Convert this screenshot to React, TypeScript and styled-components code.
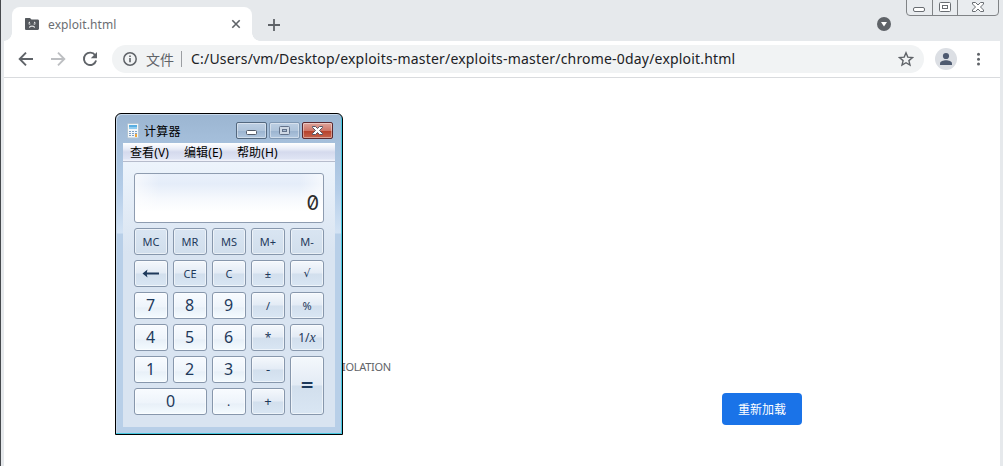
import React from "react";
import styled, { createGlobalStyle, css } from "styled-components";

const GlobalStyle = createGlobalStyle`
  * { box-sizing: border-box; }
  body { margin: 0; overflow: hidden; font-family: "Noto Sans", "Noto Sans CJK SC", sans-serif; }
  button { font-family: inherit; margin: 0; padding: 0; }
`;

const Desktop = styled.div`
  position: relative;
  width: 1003px;
  height: 466px;
  padding: 0 3px 0 4px;
  background: linear-gradient(90deg, #46494d 1px, #e6e9ec 1px);
  display: flex;
  flex-direction: column;
  overflow: hidden;
`;

const TabStrip = styled.div`
  height: 41px;
  flex: none;
  display: flex;
  align-items: flex-start;
  padding: 7px 0 0 8px;
`;

const Tab = styled.div`
  position: relative;
  width: 240px;
  height: 34px;
  padding: 0 10px 0 12px;
  border-radius: 8px 8px 0 0;
  background: #fff;
  display: flex;
  align-items: center;
  &::before, &::after {
    content: "";
    position: absolute;
    bottom: 0;
    width: 8px;
    height: 8px;
  }
  &::before { left: -8px; background: radial-gradient(circle at 0 0, transparent 7.5px, #fff 8px); }
  &::after { right: -8px; background: radial-gradient(circle at 100% 0, transparent 7.5px, #fff 8px); }
`;

const TabTitle = styled.span`
  flex: 1;
  margin-left: 8px;
  font-size: 12px;
  letter-spacing: 0.1px;
  color: #6b6e72;
`;

const NewTab = styled.div`
  margin: 9px 0 0 14px;
  height: 16px;
  flex: 1;
`;

const TabSearch = styled.div`
  margin: 10px 109px 0 0;
  height: 14px;
  svg { display: block; }
`;

const WindowControls = styled.div`
  position: absolute;
  top: -2px;
  left: 906px;
  width: 93px;
  height: 18px;
  border: 1px solid #808386;
  border-radius: 0 0 4px 4px;
  background: #e9ecef;
  display: flex;
`;

const WindowControl = styled.div<{ $width: number }>`
  width: ${(p) => p.$width}px;
  height: 16px;
  & + & { border-left: 1px solid #808386; }
  svg { display: block; }
`;

const Toolbar = styled.div`
  height: 37px;
  flex: none;
  padding: 0 13px 1px 14px;
  background: #fff;
  border-bottom: 1px solid #d9dbde;
  display: flex;
  align-items: center;
`;

const NavButtons = styled.div`
  width: 94px;
  display: flex;
  gap: 16px;
  svg { display: block; }
`;

const Omnibox = styled.div`
  width: 812px;
  height: 28px;
  padding: 0 10px;
  border-radius: 14px;
  background: #f1f3f4;
  display: flex;
  align-items: center;
  svg { flex: none; }
`;

const Scheme = styled.span`
  margin-left: 8px;
  padding-right: 7px;
  border-right: 1px solid #9b9ea2;
  line-height: 16px;
  font-size: 14px;
  font-family: "Noto Sans CJK SC", sans-serif;
  color: #5f6368;
`;

const Url = styled.span`
  flex: 1;
  margin-left: 9px;
  font-size: 14px;
  letter-spacing: 0.19px;
  white-space: nowrap;
  color: #202124;
`;

const Avatar = styled.div`
  width: 22px;
  height: 22px;
  margin: 0 13px 0 11px;
  border-radius: 50%;
  background: #dcdfe4;
  svg { display: block; }
`;

const Page = styled.main`
  width: 996px;
  flex: 1;
  background: #fff;
  padding: 280px 198px 0 338px;
  display: flex;
  flex-direction: column;
`;

const ErrorCode = styled.p`
  margin: 0;
  height: 35px;
  font-size: 11px;
  line-height: 18px;
  letter-spacing: -0.3px;
  color: #5f6368;
`;

const ReloadButton = styled.button`
  align-self: flex-end;
  width: 80px;
  height: 32px;
  border: 0;
  border-radius: 4px;
  background: #1a73e8;
  color: #fff;
  font: 12px/32px "Noto Sans CJK SC", sans-serif;
`;

const CalcWindow = styled.section`
  position: absolute;
  left: 115px;
  top: 113px;
  width: 228px;
  height: 322px;
  padding: 1px 7px 7px;
  border: 1px solid #000;
  border-radius: 6px 6px 0 0;
  background: linear-gradient(#9bb5d1 0, #a5bfdb 28px, #b4cde8 75px, #d3e3f4 119px, #b8cfe8 120px);
  box-shadow: inset -1px -1px 0 #45c8e0, inset 1px 1px 0 #c8d9eb;
  color: #1e395b;
`;

const TitleBar = styled.div`
  height: 28px;
  padding: 7px 2px 0 3px;
  display: flex;
  > svg { display: block; margin-top: 1px; }
`;

const CalcTitle = styled.span`
  flex: 1;
  margin-left: 4px;
  font: 12px/18px "Noto Sans CJK SC", sans-serif;
  letter-spacing: 0.3px;
  color: #000;
`;

const CaptionButtons = styled.div`
  display: flex;
  gap: 2px;
`;

const CaptionButton = styled.div<{ $kind?: "close" | "idle" }>`
  width: 31px;
  height: 17px;
  border: 1px solid ${(p) => (p.$kind === "close" ? "#5b2930" : p.$kind === "idle" ? "#7f97b2" : "#53687f")};
  border-radius: 2px;
  box-shadow: inset 0 0 0 1px rgba(255, 255, 255, 0.4);
  background: ${(p) =>
    p.$kind === "close"
      ? "linear-gradient(#dfa49b 0, #ce7769 50%, #b53f2a 52%, #c5644e 100%)"
      : "linear-gradient(#bdcfe3 0, #afc4db 50%, #9ab3cf 52%, #b1c7df 100%)"};
  svg { display: block; }
`;

const Client = styled.div`
  width: 212px;
  height: 284px;
  background: linear-gradient(#edf4fc 19px, #d9e4f1 110px);
`;

const MenuBar = styled.div`
  height: 19px;
  padding-left: 7px;
  display: flex;
  border-bottom: 1px solid #b6bccc;
  background: linear-gradient(#fff 0, #e8ecf7 6px, #d5daed 9px, #dfe4f4 16px, #f0f2fa 17px);
  font-size: 12px;
  line-height: 19px;
  color: #000;
`;

const MenuItem = styled.span<{ $width: number }>`
  width: ${(p) => p.$width}px;
  white-space: nowrap;
  letter-spacing: 0.1px;
`;

const CalcBody = styled.div`
  padding: 11px 11px 0;
`;

const Display = styled.div`
  height: 50px;
  margin-bottom: 5px;
  padding: 17px 4px 0 0;
  border: 1px solid #8e9cb0;
  border-radius: 3px;
  background: linear-gradient(90deg, rgba(255, 255, 255, 0.6), transparent 24px, transparent 164px, rgba(255, 255, 255, 0.6)),
    linear-gradient(#e9f0fb 0, #e5edf9 10px, #f6f9fd 25px, #fff 38px);
  font: 20px/24px Inter, sans-serif;
  font-feature-settings: "zero" 1;
  text-align: right;
  color: #2c2c2c;
`;

const Keypad = styled.div`
  display: grid;
  grid-template-columns: repeat(5, 34px);
  grid-auto-rows: 27px;
  gap: 5px;
`;

type KeyKind = "memory" | "digit" | "operator";

const keyFills: Record<KeyKind, string> = {
  memory: "linear-gradient(#d9e5f2, #d1deec)",
  digit: "linear-gradient(#f8fbff 0, #eef4fb 55%, #e8f0f8 60%, #f4fbff 100%)",
  operator: "linear-gradient(#f4f8fc 0, #e3ebf5 49%, #d2dfed 51%, #d9e6f3 100%)",
};

const Key = styled.button<{ $kind: KeyKind; $cols?: number; $rows?: number; $size?: number }>`
  border: 1px solid #8797ac;
  border-radius: 3px;
  background: ${(p) => keyFills[p.$kind]};
  box-shadow: inset 0 0 0 1px rgba(255, 255, 255, 0.55);
  color: #1e395b;
  font-size: ${(p) => p.$size ?? (p.$kind === "digit" ? 16 : 11)}px;
  line-height: 25px;
  display: flex;
  align-items: center;
  justify-content: center;
  padding-right: ${(p) => (p.$kind === "digit" && !p.$cols ? 1 : 0)}px;
  ${(p) => p.$cols && css`grid-column: span ${p.$cols};`}
  ${(p) => p.$rows && css`grid-row: span ${p.$rows};`}
  i { font: italic 14px "Liberation Serif", serif; }
`;

const Root = styled.span`
  font: 11px/25px "DejaVu Sans", sans-serif;
`;

const EqualsSign = styled.span`
  font: bold 17px/25px "DejaVu Sans", sans-serif;
`;

interface KeySpec {
  label: React.ReactNode;
  kind: KeyKind;
  cols?: number;
  rows?: number;
  size?: number;
}

const Backspace = () => (
  <svg width="18" height="11" viewBox="0 0 18 11">
    <path d="M0.5 5.5 L5.5 1.500 L4.800 4.500 H17 V6.500 H4.800 L5.500 9.500 Z" fill="#1e395b" />
  </svg>
);

const keys: KeySpec[] = [
  { label: "MC", kind: "memory" },
  { label: "MR", kind: "memory" },
  { label: "MS", kind: "memory" },
  { label: "M+", kind: "memory" },
  { label: "M-", kind: "memory" },
  { label: <Backspace />, kind: "operator" },
  { label: "CE", kind: "operator" },
  { label: "C", kind: "operator" },
  { label: "±", kind: "operator" },
  { label: <Root>√</Root>, kind: "operator" },
  { label: "7", kind: "digit" },
  { label: "8", kind: "digit" },
  { label: "9", kind: "digit" },
  { label: "/", kind: "operator" },
  { label: "%", kind: "operator" },
  { label: "4", kind: "digit" },
  { label: "5", kind: "digit" },
  { label: "6", kind: "digit" },
  { label: "*", kind: "operator", size: 12 },
  { label: <span>1/<i>x</i></span>, kind: "operator", size: 12 },
  { label: "1", kind: "digit" },
  { label: "2", kind: "digit" },
  { label: "3", kind: "digit" },
  { label: "-", kind: "operator", size: 13 },
  { label: <EqualsSign>=</EqualsSign>, kind: "operator", rows: 2 },
  { label: "0", kind: "digit", cols: 2 },
  { label: ".", kind: "digit", size: 12 },
  { label: "+", kind: "operator", size: 13 },
];

const SadFolder = () => (
  <svg width="16" height="16" viewBox="0 0 16 16">
    <path d="M1.500 2H6l1.500 1.500h6.200c.7 0 1.300.6 1.300 1.300v8c0 .7-.6 1.200-1.300 1.200H2.300C1.600 14 1 13.500 1 12.700V3.200C1 2.500 1.200 2 1.500 2z" fill="#55595e" />
    <path d="M4.500 7L6 6M11.500 7L10 6M4.800 8h1.500M9.700 8h1.500M5.500 11.500V10.800h1V10.200h3v.6h1v.7" stroke="#fff" fill="none" />
  </svg>
);

const CalcIcon = () => (
  <svg width="14" height="16" viewBox="0 0 14 16">
    <rect x="1.500" y="0.500" width="11" height="14.500" rx="1" fill="#f2f6f9" stroke="#b3c4d0" />
    <path d="M3 2h8v4H3z" fill="#58aee2" />
    <path d="M3 4h8v2H3z" fill="#8fcbee" />
    <path d="M3 8h2v1H3zM6 8h2v1H6zM9 8h2v1H9zM3 10h2v1H3zM6 10h2v1H6zM9 10h2v1H9zM3 12h2v1H3zM6 12h2v1H6z" fill="#7d9fc4" />
    <path d="M9 11h2v3H9z" fill="#efa63b" />
  </svg>
);

export default function App() {
  return (
    <>
      <GlobalStyle />
      <Desktop>
        <TabStrip>
          <Tab>
            <SadFolder />
            <TabTitle>exploit.html</TabTitle>
            <svg width="12" height="12" viewBox="0 0 12 12">
              <path d="M2.300 2.300l7.400 7.400M9.700 2.300L2.300 9.700" stroke="#5f6368" strokeWidth="1.600" />
            </svg>
          </Tab>
          <NewTab>
            <svg width="16" height="16" viewBox="0 0 16 16">
              <path d="M8 2v12M2 8h12" stroke="#5f6368" strokeWidth="1.800" />
            </svg>
          </NewTab>
          <TabSearch>
            <svg width="14" height="14" viewBox="0 0 14 14">
              <circle cx="7" cy="7" r="7" fill="#5f6368" />
              <path d="M4 5h6L7 9.500z" fill="#fff" />
            </svg>
          </TabSearch>
        </TabStrip>
        <WindowControls>
          <WindowControl $width={25}>
            <svg width="25" height="16">
              <rect x="6.500" y="8.500" width="11" height="4" rx="1.500" fill="#fff" stroke="#696d72" />
            </svg>
          </WindowControl>
          <WindowControl $width={25}>
            <svg width="24" height="16">
              <rect x="6.500" y="3.500" width="11" height="9" rx="1" fill="#fff" stroke="#696d72" />
              <rect x="9.500" y="6.500" width="5" height="3" fill="#fff" stroke="#696d72" />
            </svg>
          </WindowControl>
          <WindowControl $width={41}>
            <svg width="40" height="16">
              <path d="M14.500 3.500h3l2.500 2.500 2.500-2.500h3v1.500L22.500 8l3 3v1.500h-3L20 10l-2.500 2.500h-3V11l3-3-3-3z" fill="#fff" stroke="#696d72" />
            </svg>
          </WindowControl>
        </WindowControls>
        <Toolbar>
          <NavButtons>
            <svg width="16" height="16" viewBox="0 0 16 16" fill="none" stroke="#5f6368" strokeWidth="1.900">
              <path d="M15 8H2.500M8 1.700L1.700 8 8 14.300" />
            </svg>
            <svg width="16" height="16" viewBox="0 0 16 16" fill="none" stroke="#bdbfc2" strokeWidth="1.900">
              <path d="M1 8h12.500M8 1.700L14.300 8 8 14.300" />
            </svg>
            <svg width="16" height="16" viewBox="0 0 16 16">
              <path d="M13.200 4.200A6.200 6.200 0 1 0 14.100 9.500" fill="none" stroke="#5f6368" strokeWidth="1.900" />
              <path d="M15 1v6.200H8.800z" fill="#5f6368" />
            </svg>
          </NavButtons>
          <Omnibox>
            <svg width="16" height="16" viewBox="0 0 16 16">
              <circle cx="8" cy="8" r="6.200" fill="none" stroke="#5f6368" strokeWidth="1.500" />
              <path d="M7.200 7h1.600v4.300H7.200zM7.200 4.500h1.600v1.600H7.200z" fill="#5f6368" />
            </svg>
            <Scheme>文件</Scheme>
            <Url>C:/Users/vm/Desktop/exploits-master/exploits-master/chrome-0day/exploit.html</Url>
            <svg width="16" height="16" viewBox="0 0 16 16">
              <path d="M8 1.800l1.800 4.300 4.700.4-3.600 3.100 1.100 4.500L8 11.700l-4 2.400 1.100-4.500L1.500 6.500l4.700-.4z" fill="none" stroke="#5f6368" strokeWidth="1.400" />
            </svg>
          </Omnibox>
          <Avatar>
            <svg width="22" height="22" viewBox="0 0 22 22">
              <circle cx="11" cy="8" r="3.100" fill="#4e5a70" />
              <path d="M5 17v-1.500c0-2.200 3.500-3.200 6-3.200s6 1 6 3.200V17z" fill="#4e5a70" />
            </svg>
          </Avatar>
          <svg width="16" height="16" viewBox="0 0 16 16" fill="#5f6368">
            <circle cx="8.500" cy="3.300" r="1.500" />
            <circle cx="8.500" cy="8.200" r="1.500" />
            <circle cx="8.500" cy="13.100" r="1.500" />
          </svg>
        </Toolbar>
        <Page>
          <ErrorCode>IOLATION</ErrorCode>
          <ReloadButton>重新加载</ReloadButton>
        </Page>
        <CalcWindow>
          <TitleBar>
            <CalcIcon />
            <CalcTitle>计算器</CalcTitle>
            <CaptionButtons>
              <CaptionButton>
                <svg width="29" height="15">
                  <rect x="9.500" y="7.500" width="10" height="4" rx="1" fill="#fff" stroke="#535b69" />
                </svg>
              </CaptionButton>
              <CaptionButton $kind="idle">
                <svg width="29" height="15">
                  <rect x="9.500" y="3.500" width="10" height="8" rx="1" fill="#cfd9e5" stroke="#62728a" />
                  <rect x="12.500" y="6.500" width="4" height="2" fill="#a9bcd1" stroke="#62728a" />
                </svg>
              </CaptionButton>
              <CaptionButton $kind="close">
                <svg width="29" height="15">
                  <path d="M9.500 3.500h3l2 2 2-2h3v1L16.500 7.500l3 3v1h-3l-2-2-2 2h-3v-1l3-3-3-3z" fill="#fff" stroke="#535666" />
                </svg>
              </CaptionButton>
            </CaptionButtons>
          </TitleBar>
          <Client>
            <MenuBar>
              <MenuItem $width={54}>查看(V)</MenuItem>
              <MenuItem $width={53}>编辑(E)</MenuItem>
              <MenuItem $width={50}>帮助(H)</MenuItem>
            </MenuBar>
            <CalcBody>
              <Display>0</Display>
              <Keypad>
                {keys.map((k, i) => (
                  <Key key={i} $kind={k.kind} $cols={k.cols} $rows={k.rows} $size={k.size}>
                    {k.label}
                  </Key>
                ))}
              </Keypad>
            </CalcBody>
          </Client>
        </CalcWindow>
      </Desktop>
    </>
  );
}
